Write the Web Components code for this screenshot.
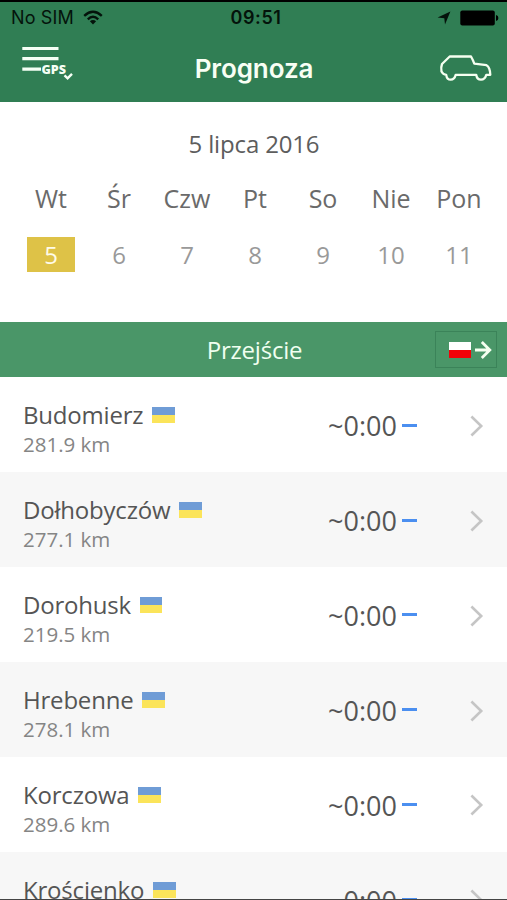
<!DOCTYPE html>
<html lang="pl">
<head>
<meta charset="utf-8">
<title>Prognoza</title>
<style>
body{margin:0;background:#fff;font-family:"Open Sans","Noto Sans",sans-serif;color:#5c5c5c;overflow:hidden}
</style>
</head>
<body>
<forecast-app></forecast-app>
<script>
const define = (name, html, setup) => customElements.define(name, class extends HTMLElement {
  constructor(){
    super();
    const t = document.createElement('template');
    t.innerHTML = html;
    this.attachShadow({mode:'open'}).append(t.content.cloneNode(true));
  }
  connectedCallback(){ if (setup) setup(this, this.shadowRoot); }
});

define('status-bar', `
<style>
:host{display:grid;grid-template-columns:1fr auto 1fr;align-items:center;height:28px;padding:0 8px 0 11px;color:#04130b;font:18px/28px Inter,sans-serif}
.l,.r{display:flex;align-items:center}
.l{gap:9px;letter-spacing:.15px}.r{justify-content:flex-end;gap:9px}
b{font-weight:600;letter-spacing:.6px;padding-left:2px;font-size:18px}
svg{display:block}
</style>
<span class="l"><span>No SIM</span>
<svg width="20" height="16" viewBox="0 0 20 16"><g fill="none" stroke="#04130b" stroke-width="2.4"><path d="M1.2 5.8Q10-2.2 18.8 5.8"/><path d="M4.8 9.3Q10 4.4 15.2 9.3"/></g><path d="M6.9 11.2Q10 8.7 13.1 11.2L10 14.6Z" fill="#04130b"/></svg></span>
<b>09:51</b>
<span class="r"><svg width="14" height="14" viewBox="0 0 14 14"><path d="M13.4.6L8 13.6 7.3 7.2.6 6.4Z" fill="#04130b"/></svg>
<svg width="39" height="16" viewBox="0 0 39 16"><rect x=".3" y=".5" width="34.5" height="15" rx="2" fill="#000"/><path d="M36 5Q38.4 5.4 38.4 8T36 11Z" fill="#000"/></svg></span>`);

define('nav-bar', `
<style>
:host{display:grid;grid-template-columns:60px 1fr 60px;height:70px;padding:0 14px 0 15px;color:#fff}
h1{margin:0;text-align:center;font:600 26px/73px Inter,sans-serif;letter-spacing:-.1px;color:#f8fff4}
svg{display:block}
text{font:800 11.5px "Open Sans",sans-serif;fill:#f5fff5}
</style>
<svg width="60" height="70" viewBox="15 32 60 70"><path d="M22.3 48.5H58.5M22.3 58.7H58.5M22.3 69.2H41" stroke="#f5fff5" stroke-width="3.2"/><text x="41.5" y="73.8" textLength="24.5" lengthAdjust="spacingAndGlyphs">GPS</text><path d="M64.5 75.3L67.6 78.3 72 73.8" fill="none" stroke="#f5fff5" stroke-width="2.4"/></svg>
<h1><slot></slot></h1>
<svg width="60" height="70" viewBox="433 32 60 70"><path d="M449.7 56.5H471Q473 60 474.3 63.6L486.5 65.2Q490 67 490.3 74.8H486.3Q485 79.7 481 79.7T476.2 74.8H455.7Q454.5 79.7 450.7 79.7T446.2 74.8Q443 74.5 441.5 71.5 440.7 67.5 442 64Z" fill="none" stroke="#f5fff0" stroke-width="2.3" stroke-linejoin="round"/></svg>`);

define('day-cell', `
<style>
:host{display:flex;flex-direction:column;align-items:center;text-align:center;width:68px}
.n{font-size:25px;line-height:38px;height:38px;margin-bottom:20px;color:#6a6a6a;white-space:nowrap}
.d{font-size:24px;width:48px;height:35px;line-height:35px;color:#999}
:host([selected]) .d{background:#dec247;color:#fffbe9}
</style><span class="n"></span><span class="d"><slot></slot></span>`, (el, r) => { r.querySelector('.n').textContent = el.getAttribute('name'); });

define('date-picker', `
<style>
:host{display:block;height:220.4px;box-sizing:border-box;padding-top:25px;background:#fff}
.t{text-align:center;font-size:24px;line-height:34px;padding:0 0 18px 1px;color:#5d5d5d;letter-spacing:-.15px}
.w{display:flex;padding-left:17px}
</style><div class="t">5 lipca 2016</div>
<div class="w"><day-cell name="Wt" selected>5</day-cell><day-cell name="Śr">6</day-cell><day-cell name="Czw">7</day-cell><day-cell name="Pt">8</day-cell><day-cell name="So">9</day-cell><day-cell name="Nie">10</day-cell><day-cell name="Pon">11</day-cell></div>`);

define('section-bar', `
<style>
:host{display:grid;grid-template-columns:72px 1fr 72px;align-items:center;height:55px;background:#4a9668;color:#f0fff0;box-sizing:border-box}
.c{grid-column:2;text-align:center;font-size:24px;line-height:54px;letter-spacing:-.2px;padding-left:2px}
.b{box-sizing:border-box;width:62px;height:37px;border:1px solid #3b8359;display:flex;align-items:center;gap:4px;padding-left:13px}
.f{width:22px;height:16px;background:linear-gradient(#fff 50%,#f40009 50%)}
svg{display:block}
</style><span class="c"><slot></slot></span><span class="b"><i class="f"></i><svg width="17" height="18" viewBox="0 0 17 18"><path d="M0 9H14.5M6.8 1L14.8 9 6.8 17" fill="none" stroke="#f5fff0" stroke-width="2.8"/></svg></span>`);

define('crossing-row', `
<style>
:host{display:grid;grid-template-columns:305px 1fr 37px;align-items:center;height:94.9px;padding-left:23px;box-sizing:border-box}
:host(:nth-child(even)){background:#f7f7f7}
.i{padding-top:6.6px}
.n{display:flex;align-items:center;gap:9px;font-size:24px;line-height:32px;color:#555;letter-spacing:-.2px}
.f{width:22.5px;height:16px;background:linear-gradient(#6f9cd6 50%,#fbe45a 50%)}
.k{font-size:20.5px;line-height:26px;height:26px;color:#858585}
.t{display:flex;align-items:center;gap:5px;font-size:27px;line-height:40px;color:#555;padding-top:2.6px}
.m{width:15px;height:3px;background:#4b8ff0;margin-bottom:2px}
svg{display:block;margin-top:2px}
</style>
<div class="i"><div class="n"><slot></slot><i class="f"></i></div><div class="k"></div></div>
<div class="t"><span>~0:00</span><i class="m"></i></div>
<svg width="14" height="22" viewBox="0 0 14 22"><path d="M1.4 1.5L11.2 11 1.4 20.5" fill="none" stroke="#c5c5c5" stroke-width="2.6"/></svg>`, (el, r) => { const km = el.getAttribute('km'); r.querySelector('.k').textContent = km ? km + ' km' : ''; });

define('forecast-app', `
<style>
:host{display:flex;flex-direction:column;height:900px;width:507px;overflow:hidden;box-sizing:border-box;border-top:2px solid #000;border-bottom:1px solid #444;background:#fff}
header{height:100px;background:#307e54;flex:none}
status-bar{padding-top:2px}
date-picker,section-bar{flex:none}
main{flex:1;min-height:0;overflow:hidden}
</style>
<header><status-bar></status-bar><nav-bar>Prognoza</nav-bar></header>
<date-picker></date-picker>
<section-bar>Przejście</section-bar>
<main>
<crossing-row km="281.9">Budomierz</crossing-row>
<crossing-row km="277.1">Dołhobyczów</crossing-row>
<crossing-row km="219.5">Dorohusk</crossing-row>
<crossing-row km="278.1">Hrebenne</crossing-row>
<crossing-row km="289.6">Korczowa</crossing-row>
<crossing-row>Krościenko</crossing-row>
</main>`);
</script>
</body>
</html>
